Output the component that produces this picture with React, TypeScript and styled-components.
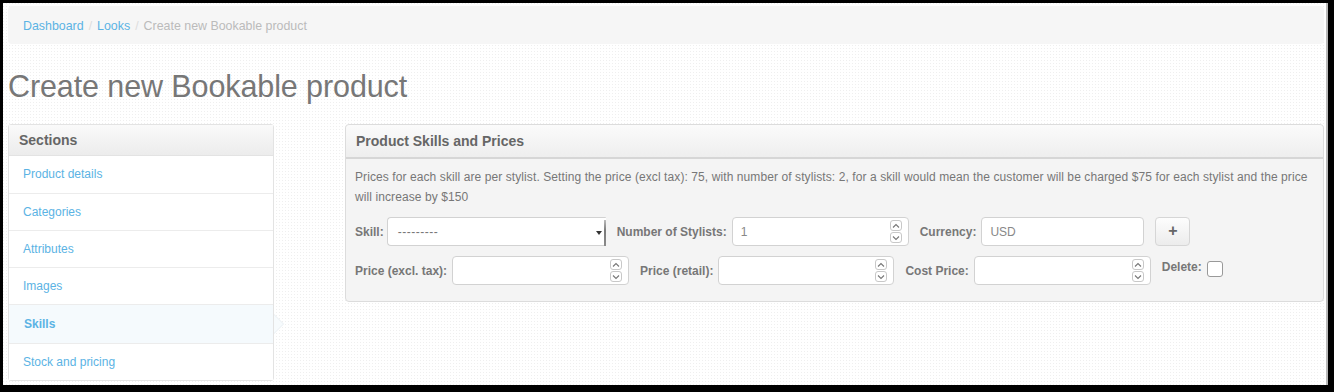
import React from "react";
import styled, { createGlobalStyle } from "styled-components";

const Global = createGlobalStyle`
  html, body { margin: 0; padding: 0; background: #000; }
  body { font-family: "Liberation Sans", Arial, sans-serif; }
  * { box-sizing: border-box; }
`;

const Frame = styled.div`
  width: 1334px;
  height: 392px;
  background: #000;
  padding: 3px 6px 7px 3px;
`;

const Page = styled.div`
  height: 100%;
  background-color: #fff;
  background-image: conic-gradient(from 270deg at 1px 1px, #efefef 25%, transparent 0);
  background-size: 3px 3px;
  border-right: 2px solid #b8b8b8;
  padding: 3px 2px 0 5px;
  overflow: hidden;
`;

const Breadcrumb = styled.ul`
  list-style: none;
  margin: 0;
  height: 38px;
  padding: 1px 15px 0 15px;
  background: #f6f6f6;
  border-radius: 4px;
  display: flex;
  align-items: center;
  font-size: 12.4px;
  color: #bbb;
`;

const Crumb = styled.li`
  display: flex;
  align-items: center;
`;

const CrumbLink = styled.a`
  color: #5bb3e4;
  text-decoration: none;
`;

const Divider = styled.span`
  color: #ddd;
  padding: 0 5px;
`;

const Title = styled.h1`
  margin: 0;
  padding: 24px 0 0 0;
  height: 80px;
  font-size: 30.5px;
  font-weight: normal;
  color: #777;
  line-height: 36px;
  letter-spacing: -0.1px;
`;

const Body = styled.div`
  display: flex;
  align-items: flex-start;
  gap: 71px;
`;

const Sidebar = styled.div`
  width: 266px;
  flex: none;
  border: 1px solid #e3e3e3;
  border-radius: 3px;
  background: #fff;
`;

const SideHeader = styled.div`
  height: 31px;
  padding: 0 10px;
  display: flex;
  align-items: center;
  font-size: 14px;
  font-weight: bold;
  color: #666;
  background: linear-gradient(#fafafa, #ececec);
  border-bottom: 1px solid #e3e3e3;
`;

const NavItem = styled.a<{ $active?: boolean }>`
  position: relative;
  display: flex;
  align-items: center;
  height: ${(p) => (p.$active ? "39px" : "37px")};
  font-size: 12px;
  color: #5bb3e4;
  text-decoration: none;
  font-weight: ${(p) => (p.$active ? "bold" : "normal")};
  padding: ${(p) => (p.$active ? "0 0 1px 15px" : "0 0 1px 14px")};
  background: ${(p) => (p.$active ? "#f5fafd" : "#fff")};
  border-top: 1px solid #ececec;
  &:first-of-type { border-top: none; }
  ${(p) =>
    p.$active &&
    `
    &::after {
      content: "";
      position: absolute;
      right: -11px;
      top: 50%;
      margin-top: -10px;
      border-style: solid;
      border-width: 10px 0 10px 10px;
      border-color: transparent transparent transparent #e8eef2;
    }
    &::before {
      content: "";
      position: absolute;
      right: -10px;
      top: 50%;
      margin-top: -9px;
      border-style: solid;
      border-width: 9px 0 9px 9px;
      border-color: transparent transparent transparent #f7fbfd;
      z-index: 1;
    }
  `}
`;

const Panel = styled.div`
  flex: 1;
  border: 1px solid #dcdcdc;
  border-radius: 4px;
  background: #f4f4f4;
`;

const PanelHeader = styled.div`
  height: 34px;
  padding: 0 10px;
  display: flex;
  align-items: center;
  font-size: 14px;
  font-weight: bold;
  color: #666;
  background: linear-gradient(#fbfbfb, #eeeeee);
  border-bottom: 2px solid #d6d6d6;
  border-radius: 4px 4px 0 0;
`;

const PanelBody = styled.div`
  padding: 8px 9px 16px 9px;
`;

const Help = styled.p`
  margin: 0 0 10px 0;
  font-size: 12px;
  line-height: 20px;
  color: #777;
  letter-spacing: 0.09px;
`;

const FormRow = styled.div`
  display: flex;
  align-items: center;
  margin-bottom: 10px;
  &:last-child { margin-bottom: 0; }
`;

const Field = styled.div<{ $top?: boolean }>`
  display: flex;
  align-items: ${(p) => (p.$top ? "flex-start" : "center")};
  align-self: ${(p) => (p.$top ? "flex-start" : "center")};
  margin-top: ${(p) => (p.$top ? "4px" : "0")};
  margin-right: 11px;
`;

const Label = styled.label<{ $gap?: number }>`
  font-size: 12px;
  font-weight: bold;
  color: #777;
  margin-right: ${(p) => p.$gap ?? 5}px;
`;

const InputBox = styled.div<{ $w: number }>`
  position: relative;
  width: ${(p) => p.$w}px;
  height: 29px;
  background: #fff;
  border: 1px solid #d2d2d2;
  border-radius: 4px;
  display: flex;
  align-items: center;
  padding: 0 8px;
  font-size: 12px;
  color: #888;
`;

const SelectBox = styled(InputBox)`
  padding-left: 10px;
  border-right: none;
  border-radius: 4px 1px 1px 4px;
  color: #777;
  letter-spacing: 0.5px;
  &::after {
    content: "";
    position: absolute;
    right: 0;
    top: 2px;
    bottom: -1px;
    width: 2px;
    background: linear-gradient(#bdbdbd, #7a7a7a 40%, #8a8a8a);
  }
`;

const Caret = styled.span`
  position: absolute;
  right: 4px;
  top: 50%;
  margin-top: -1px;
  border-style: solid;
  border-width: 4px 3px 0 3px;
  border-color: #333 transparent transparent transparent;
`;

const Spinner = styled.div`
  position: absolute;
  right: 6px;
  top: 2px;
  display: flex;
  flex-direction: column;
  gap: 1px;
`;

const SpinBtn = styled.div`
  width: 12px;
  height: 11px;
  border: 1px solid #c8c8c8;
  border-radius: 3px;
  display: flex;
  align-items: center;
  justify-content: center;
  background: #fff;
`;

const AddButton = styled.button`
  width: 35px;
  height: 29px;
  border: 1px solid #d6d6d6;
  border-radius: 4px;
  background: linear-gradient(#fdfdfd, #ececec);
  color: #666;
  font-size: 16px;
  font-weight: bold;
  font-family: "Liberation Sans", Arial, sans-serif;
  display: flex;
  align-items: center;
  justify-content: center;
  padding: 0 0 2px 0;
  margin-left: 0;
`;

const Check = styled.span`
  display: inline-block;
  width: 16px;
  height: 16px;
  border: 1px solid #999;
  border-radius: 3px;
  background: #fff;
  margin-top: 1px;
`;

const Chevron = ({ up }: { up?: boolean }) => (
  <svg width="8" height="6" viewBox="0 0 8 6">
    <path
      d={up ? "M1 4.5 L4 1.5 L7 4.5" : "M1 1.5 L4 4.5 L7 1.5"}
      fill="none"
      stroke="#777"
      strokeWidth="1.1"
    />
  </svg>
);

const NumberInput = ({ w, value }: { w: number; value?: string }) => (
  <InputBox $w={w}>
    {value}
    <Spinner>
      <SpinBtn>
        <Chevron up />
      </SpinBtn>
      <SpinBtn>
        <Chevron />
      </SpinBtn>
    </Spinner>
  </InputBox>
);

const sections = [
  "Product details",
  "Categories",
  "Attributes",
  "Images",
  "Skills",
  "Stock and pricing",
];

export default function App() {
  return (
    <>
      <Global />
      <Frame>
        <Page>
          <Breadcrumb>
            <Crumb>
              <CrumbLink href="#">Dashboard</CrumbLink>
              <Divider>/</Divider>
            </Crumb>
            <Crumb>
              <CrumbLink href="#">Looks</CrumbLink>
              <Divider>/</Divider>
            </Crumb>
            <Crumb>Create new Bookable product</Crumb>
          </Breadcrumb>
          <Title>Create new Bookable product</Title>
          <Body>
            <Sidebar>
              <SideHeader>Sections</SideHeader>
              {sections.map((s) => (
                <NavItem key={s} href="#" $active={s === "Skills"}>
                  {s}
                </NavItem>
              ))}
            </Sidebar>
            <Panel>
              <PanelHeader>Product Skills and Prices</PanelHeader>
              <PanelBody>
                <Help>
                  Prices for each skill are per stylist. Setting the price (excl tax): 75, with
                  number of stylists: 2, for a skill would mean the customer will be charged $75
                  for each stylist and the price will increase by $150
                </Help>
                <FormRow>
                  <Field>
                    <Label $gap={3}>Skill:</Label>
                    <SelectBox $w={219}>
                      ---------
                      <Caret />
                    </SelectBox>
                  </Field>
                  <Field>
                    <Label>Number of Stylists:</Label>
                    <NumberInput w={177} value="1" />
                  </Field>
                  <Field>
                    <Label>Currency:</Label>
                    <InputBox $w={163}>USD</InputBox>
                  </Field>
                  <Field>
                    <AddButton>+</AddButton>
                  </Field>
                </FormRow>
                <FormRow>
                  <Field>
                    <Label>Price (excl. tax):</Label>
                    <NumberInput w={177} />
                  </Field>
                  <Field>
                    <Label>Price (retail):</Label>
                    <NumberInput w={176} />
                  </Field>
                  <Field>
                    <Label>Cost Price:</Label>
                    <NumberInput w={177} />
                  </Field>
                  <Field $top>
                    <Label>Delete:</Label>
                    <Check />
                  </Field>
                </FormRow>
              </PanelBody>
            </Panel>
          </Body>
        </Page>
      </Frame>
    </>
  );
}
